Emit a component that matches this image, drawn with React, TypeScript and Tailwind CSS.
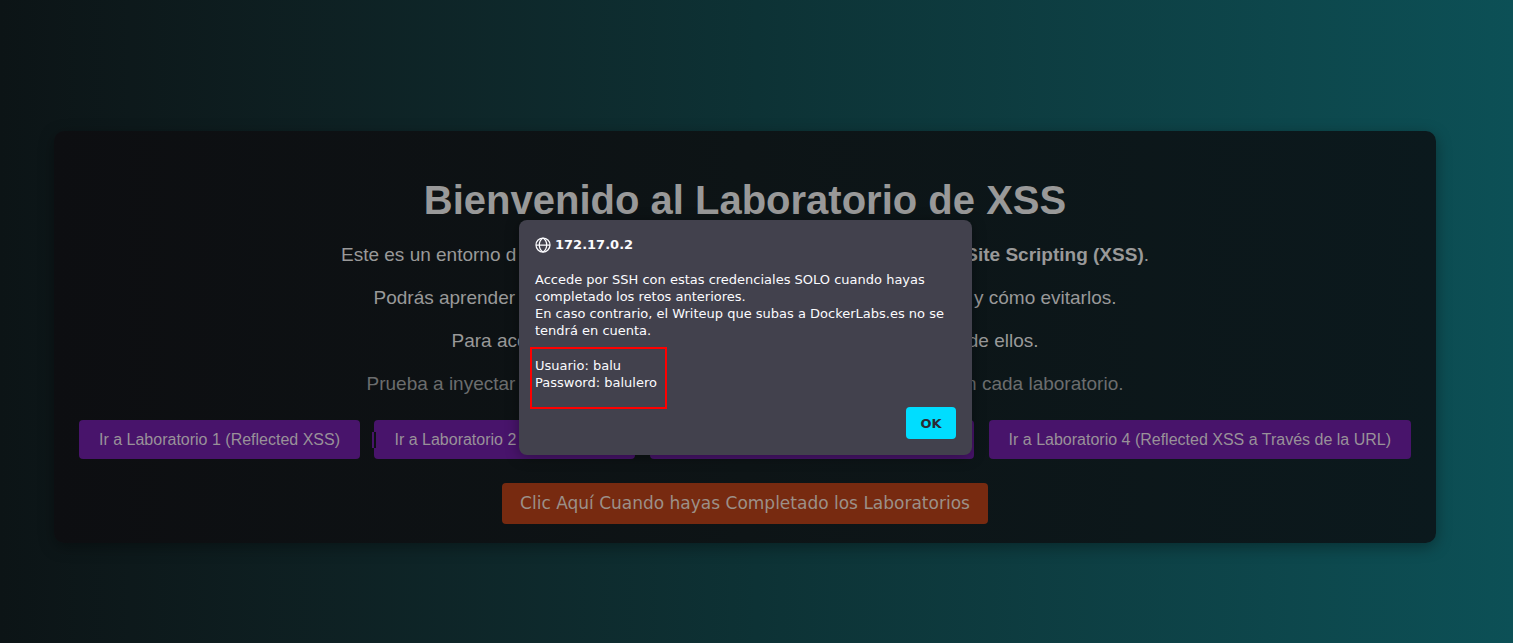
import React from "react";

type Line = { start: string; end: React.ReactNode; className: string };

const lines: Line[] = [
  {
    start: "Este es un entorno d",
    end: (
      <>
        <strong>Site Scripting (XSS)</strong>.
      </>
    ),
    className: "max-w-[808px] text-[#999999]",
  },
  { start: "Podrás aprender", end: "y cómo evitarlos.", className: "max-w-[743px] text-[#999999]" },
  { start: "Para acc", end: "de ellos.", className: "max-w-[587px] text-[#999999]" },
  { start: "Prueba a inyectar", end: "en cada laboratorio.", className: "max-w-[757px] text-[#6b6d6e]" },
];

const labs = [
  "Ir a Laboratorio 1 (Reflected XSS)",
  "Ir a Laboratorio 2 (Stored XSS)",
  "Ir a Laboratorio 3 (XSS con Dropdowns)",
  "Ir a Laboratorio 4 (Reflected XSS a Través de la URL)",
];

function GlobeIcon() {
  return (
    <svg viewBox="0 0 16 16" className="size-4 shrink-0" fill="none" stroke="currentColor" strokeWidth="1.25" aria-hidden="true">
      <circle cx="8" cy="8" r="7" />
      <path d="M1 8h14M8 1C5.2 2.7 4.3 5.2 4.3 8S5.2 13.3 8 15M8 1c2.8 1.7 3.7 4.2 3.7 7S10.8 13.3 8 15" />
    </svg>
  );
}

function AlertDialog() {
  return (
    <div
      role="alertdialog"
      aria-labelledby="alert-title"
      aria-describedby="alert-text"
      className="absolute top-[89px] left-1/2 -ml-[226px] w-[453px] rounded-lg bg-[#42414d] p-4 text-left font-['DejaVu_Sans',sans-serif] text-[13px] leading-[17px] text-[#fbfbfe] shadow-[0_2px_14px_rgba(0,0,0,0.35)]"
    >
      <h2 id="alert-title" className="flex items-center gap-1 font-bold">
        <GlobeIcon />
        172.17.0.2
      </h2>
      <div id="alert-text" className="mt-[18px] whitespace-nowrap">
        <p>
          Accede por SSH con estas credenciales SOLO cuando hayas
          <br />
          completado los retos anteriores.
          <br />
          En caso contrario, el Writeup que subas a DockerLabs.es no se
          <br />
          tendrá en cuenta.
        </p>
        <p className="mt-2 -ml-[5px] h-[62px] w-[137px] border-2 border-[#ff0000] px-[3px] py-2">
          Usuario: balu
          <br />
          Password: balulero
        </p>
      </div>
      <div className="-mt-[2px] flex justify-end">
        <button type="button" className="h-8 w-[50px] rounded-sm bg-[#00ddff] font-bold text-[#2b2a33]">
          OK
        </button>
      </div>
    </div>
  );
}

export default function App() {
  return (
    <div className="min-h-screen bg-linear-to-r from-[#0c1416] via-[#0d3235] to-[#0c5056] pt-[131px] pr-[77px] pb-[100px] pl-[54px] font-['Liberation_Sans',sans-serif]">
      <main className="relative rounded-[10px] bg-linear-to-r from-[#0d0e11] via-[#0d1416] to-[#0b191d] px-[25px] pt-[45px] pb-[19px] text-center shadow-[0_4px_15px_rgba(0,0,0,0.35)]">
        <h1 className="text-[40px] leading-[48px] font-bold text-[#999999]">Bienvenido al Laboratorio de XSS</h1>
        <div className="mt-5 flex flex-col items-center gap-[21px] text-[19px] leading-[22px]">
          {lines.map((line) => (
            <p key={line.start} className={`flex w-full justify-between ${line.className}`}>
              <span>{line.start}</span>
              <span>{line.end}</span>
            </p>
          ))}
        </div>
        <nav className="mt-[25px] flex justify-between">
          {labs.map((lab, i) => (
            <a key={lab} href="#" className="relative rounded-sm bg-[#48146b] px-5 py-[10px] text-base leading-[19px] whitespace-nowrap text-[#999199]">
              {lab}
              {i === 1 && <span className="absolute top-3 -left-[2px] h-4 w-1 border-l-2 border-[#48146b] bg-[#0d1114]" />}
            </a>
          ))}
        </nav>
        <button type="button" className="mt-6 h-[41px] rounded-sm bg-[#772a10] px-[18px] font-['DejaVu_Sans',sans-serif] text-[17px] leading-[21px] text-[#9c9088]">
          Clic Aquí Cuando hayas Completado los Laboratorios
        </button>
        <AlertDialog />
      </main>
    </div>
  );
}
